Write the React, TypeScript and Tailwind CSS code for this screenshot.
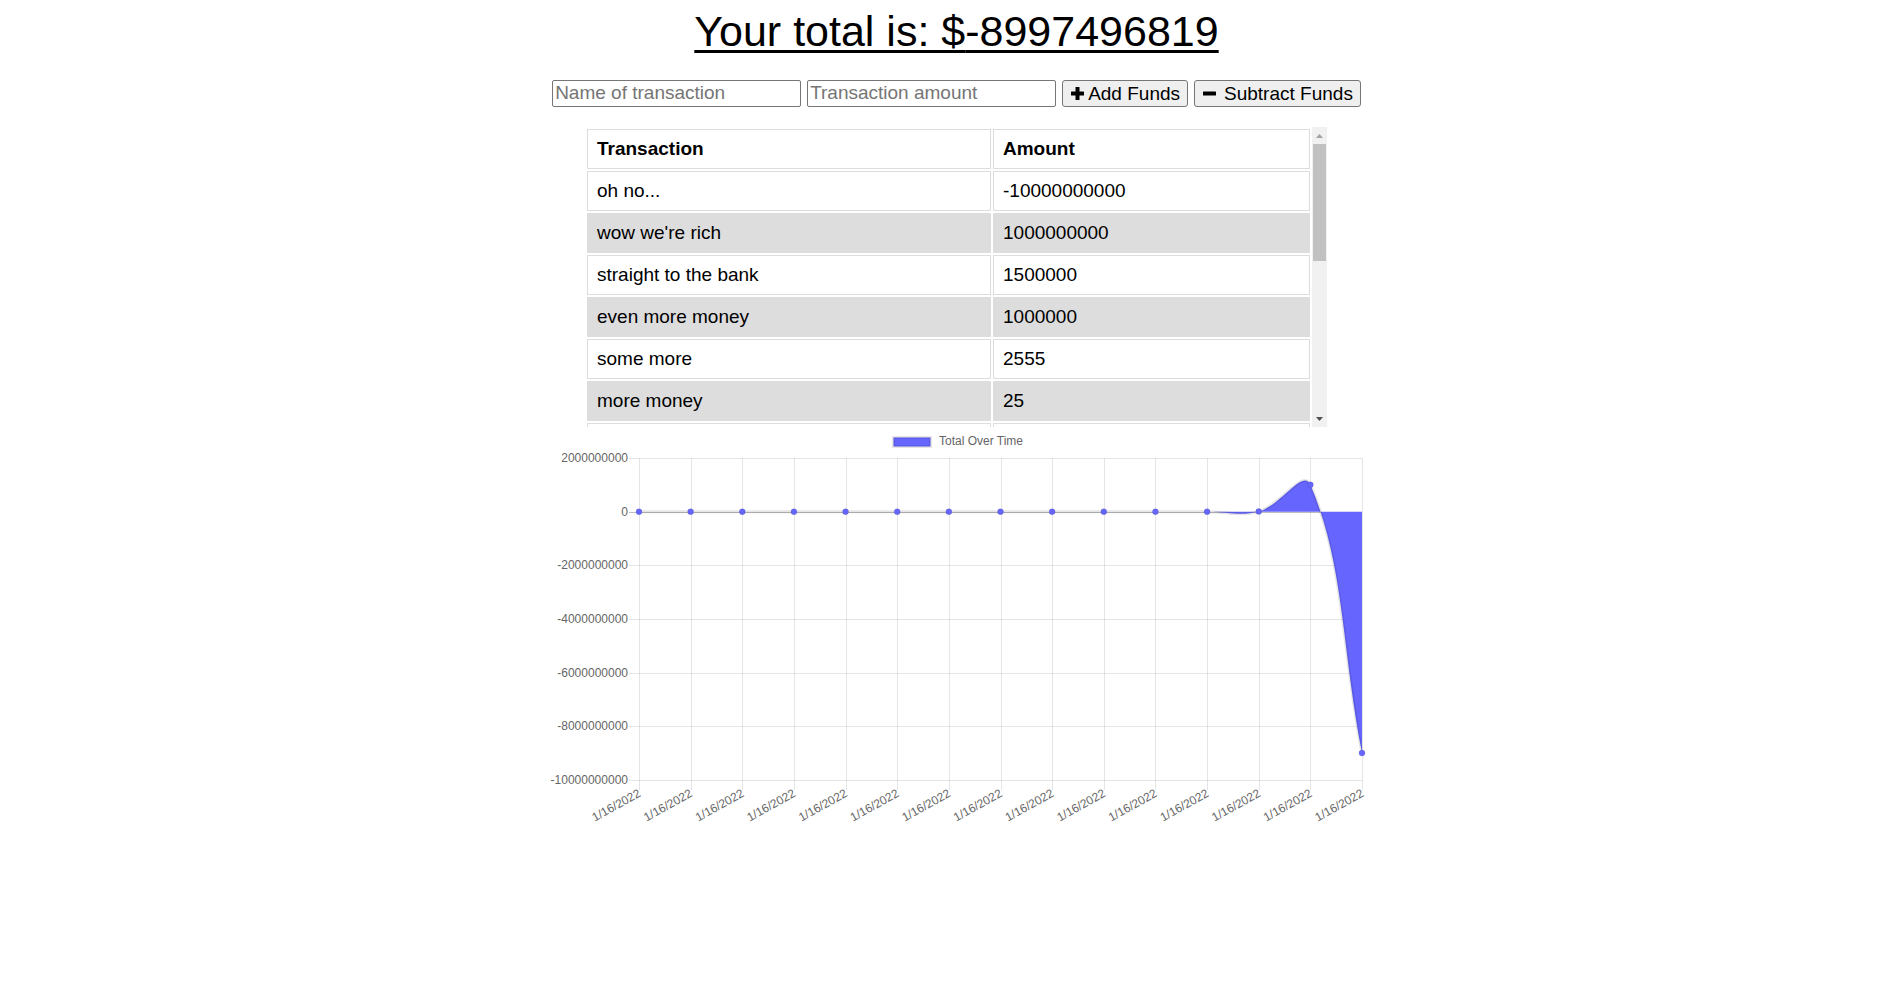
import React from "react";

type Tx = { name: string; value: number };

// newest first, like the table shows them
const transactions: Tx[] = [
  { name: "oh no...", value: -10000000000 },
  { name: "wow we're rich", value: 1000000000 },
  { name: "straight to the bank", value: 1500000 },
  { name: "even more money", value: 1000000 },
  { name: "some more", value: 2555 },
  { name: "more money", value: 25 },
  { name: "money", value: 250 },
  { name: "more", value: 150 },
  { name: "cash", value: 100 },
  { name: "tips", value: 50 },
  { name: "coins", value: 25 },
  { name: "change", value: 15 },
  { name: "found it", value: 5 },
  { name: "a bit", value: 5 },
  { name: "first", value: 1 },
];

const total = transactions.reduce((s, t) => s + t.value, 0);

// chart area in page pixels
const L = 639;
const R = 1362;
const TOP = 458;
const BOTTOM = 780;
const MAX = 2000000000;
const MIN = -10000000000;

const yPix = (v: number) => TOP + ((MAX - v) / (MAX - MIN)) * (BOTTOM - TOP);
const clamp = (v: number, a: number, b: number) => Math.min(b, Math.max(a, v));

type P = { x: number; y: number };

function buildPoints(): P[] {
  const chrono = [...transactions].reverse();
  let sum = 0;
  const step = (R - L) / (chrono.length - 1);
  return chrono.map((t, i) => {
    sum += t.value;
    return { x: L + i * step, y: yPix(sum) };
  });
}

// same maths as chart.js 2 splineCurve, tension 0.4, capped to chart area
function linePath(pts: P[]) {
  const cps = pts.map((cur, i) => {
    const prev = pts[Math.max(0, i - 1)];
    const next = pts[Math.min(pts.length - 1, i + 1)];
    const d01 = Math.hypot(cur.x - prev.x, cur.y - prev.y);
    const d12 = Math.hypot(next.x - cur.x, next.y - cur.y);
    let s01 = d01 / (d01 + d12);
    let s12 = d12 / (d01 + d12);
    if (isNaN(s01)) s01 = 0;
    if (isNaN(s12)) s12 = 0;
    const fa = 0.4 * s01;
    const fb = 0.4 * s12;
    const cap = (p: P) => ({ x: clamp(p.x, L, R), y: clamp(p.y, TOP, BOTTOM) });
    return {
      prev: cap({ x: cur.x - fa * (next.x - prev.x), y: cur.y - fa * (next.y - prev.y) }),
      next: cap({ x: cur.x + fb * (next.x - prev.x), y: cur.y + fb * (next.y - prev.y) }),
    };
  });
  let d = `M${pts[0].x},${pts[0].y}`;
  for (let i = 1; i < pts.length; i++) {
    const a = cps[i - 1].next;
    const b = cps[i].prev;
    d += ` C${a.x},${a.y} ${b.x},${b.y} ${pts[i].x},${pts[i].y}`;
  }
  return d;
}

function Chart() {
  const pts = buildPoints();
  const line = linePath(pts);
  const zero = yPix(0);
  const area = `${line} L${R},${zero} L${L},${zero} Z`;
  const yTicks = [2000000000, 0, -2000000000, -4000000000, -6000000000, -8000000000, -10000000000];
  const grid = "rgba(0,0,0,0.1)";

  return (
    <svg width={831} height={400} viewBox="541 427 831 400" className="block">
      {/* legend */}
      <rect x={893.5} y={437.5} width={37} height={9} fill="#6666ff" stroke="rgba(0,0,0,0.1)" strokeWidth={3} />
      <text x={939} y={442} fontSize={12} fill="#666" dominantBaseline="middle" fontFamily="'Liberation Sans', Arial, sans-serif">
        Total Over Time
      </text>

      {/* horizontal grid + y labels */}
      {yTicks.map((v) => {
        const y = Math.round(yPix(v)) + 0.5;
        return (
          <g key={v}>
            <line x1={629} x2={R} y1={y} y2={y} stroke={v === 0 ? "rgba(0,0,0,0.25)" : grid} strokeWidth={1} />
            <text x={628} y={y} fontSize={12} fill="#666" textAnchor="end" dominantBaseline="middle" fontFamily="'Liberation Sans', Arial, sans-serif">
              {v}
            </text>
          </g>
        );
      })}

      {/* vertical grid + x labels */}
      {pts.map((p, i) => {
        const x = Math.round(p.x) + 0.5;
        return (
          <g key={i}>
            <line x1={x} x2={x} y1={TOP} y2={BOTTOM + 10} stroke={grid} strokeWidth={1} />
            <text
              transform={`translate(${p.x + 1},${BOTTOM + 13}) rotate(-29)`}
              fontSize={12}
              fill="#666"
              textAnchor="end"
              dominantBaseline="middle"
              fontFamily="'Liberation Sans', Arial, sans-serif"
            >
              1/16/2022
            </text>
          </g>
        );
      })}

      <path d={area} fill="#6666ff" />
      <path d={line} fill="none" stroke="rgba(0,0,0,0.1)" strokeWidth={3} />
      {pts.map((p, i) => (
        <circle key={i} cx={p.x} cy={p.y} r={3} fill="#6666ff" stroke="rgba(0,0,0,0.1)" strokeWidth={1} />
      ))}
    </svg>
  );
}

function PlusIcon() {
  return (
    <svg width="15" height="15" viewBox="0 0 15 15" className="shrink-0">
      <rect x="5.5" y="1" width="4" height="13" rx="0.6" fill="#000" />
      <rect x="1" y="5.5" width="13" height="4" rx="0.6" fill="#000" />
    </svg>
  );
}

function MinusIcon() {
  return (
    <svg width="15" height="15" viewBox="0 0 15 15" className="shrink-0">
      <rect x="1" y="5.5" width="13" height="4" rx="0.6" fill="#000" />
    </svg>
  );
}

export default function App() {
  return (
    <div
      className="min-h-screen bg-white text-black flex flex-col items-center pl-[16px]"
      style={{ fontFamily: "'Liberation Sans', Arial, sans-serif" }}
    >
      <h1 className="mt-[6px] text-[43px] leading-[50px] font-normal underline decoration-[3px] underline-offset-[4px]">
        Your total is: ${total}
      </h1>

      <div className="mt-[24px] flex items-center gap-[6px] h-[27px]">
        <input
          type="text"
          placeholder="Name of transaction"
          className="w-[249px] h-[27px] border border-[#767676] rounded-[2px] px-[2px] text-[19px] placeholder:text-[#757575] outline-none"
        />
        <input
          type="text"
          placeholder="Transaction amount"
          className="w-[249px] h-[27px] border border-[#767676] rounded-[2px] px-[2px] text-[19px] placeholder:text-[#757575] outline-none"
        />
        <button className="h-[27px] flex items-center gap-[3px] px-[7px] bg-[#efefef] border border-[#767676] rounded-[3px] text-[19px] leading-none">
          <PlusIcon />
          Add Funds
        </button>
        <button className="h-[27px] flex items-center gap-[7px] px-[7px] bg-[#efefef] border border-[#767676] rounded-[3px] text-[19px] leading-none">
          <MinusIcon />
          Subtract Funds
        </button>
      </div>

      <div className="mt-[20px] mr-[1px] flex h-[300px] w-[742px]">
        <div className="w-[727px] h-[300px] overflow-hidden">
          <table className="w-[727px] border-separate border-spacing-[2px] text-[19px]">
            <thead>
              <tr>
                <th className="w-[404px] h-[40px] border border-[#ddd] pl-[9px] text-left font-bold">Transaction</th>
                <th className="h-[40px] border border-[#ddd] pl-[9px] text-left font-bold">Amount</th>
              </tr>
            </thead>
            <tbody>
              {transactions.map((t, i) => (
                <tr key={i} className={i % 2 === 1 ? "bg-[#dddddd]" : "bg-white"}>
                  <td className="w-[404px] h-[40px] border border-[#ddd] pl-[9px]">{t.name}</td>
                  <td className="h-[40px] border border-[#ddd] pl-[9px]">{t.value}</td>
                </tr>
              ))}
            </tbody>
          </table>
        </div>
        <div className="w-[15px] h-[300px] bg-[#f1f1f1] flex flex-col">
          <div className="h-[17px] flex items-center justify-center">
            <svg width="7" height="4" viewBox="0 0 7 4">
              <polygon points="0,4 7,4 3.5,0" fill="#a3a3a3" />
            </svg>
          </div>
          <div className="mx-[1px] h-[117px] bg-[#c1c1c1]" />
          <div className="flex-1" />
          <div className="h-[17px] flex items-center justify-center">
            <svg width="7" height="4" viewBox="0 0 7 4">
              <polygon points="0,0 7,0 3.5,4" fill="#505050" />
            </svg>
          </div>
        </div>
      </div>

      <Chart />
    </div>
  );
}
